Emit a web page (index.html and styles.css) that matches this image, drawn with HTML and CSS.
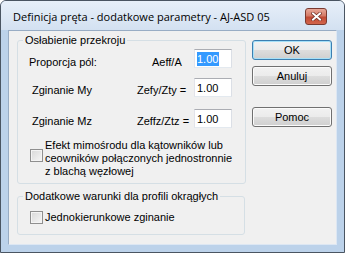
FILE: index.html
```html
<!DOCTYPE html>
<html lang="pl">
<head>
  <meta charset="UTF-8">
  <title>Definicja pręta - dodatkowe parametry</title>
  <link rel="stylesheet" href="styles.css">
</head>
<body>
  <div class="window">
    <div class="titlebar">
      <span class="title">Definicja pręta - dodatkowe parametry - AJ-ASD 05</span>
      <div class="close">
        <svg width="11" height="9" viewBox="0 0 11 9">
          <path d="M2 1.5 L9 7.5 M9 1.5 L2 7.5" stroke="#6d2a20" stroke-width="3.4" stroke-linecap="square"/>
          <path d="M2 1.5 L9 7.5 M9 1.5 L2 7.5" stroke="#fff" stroke-width="2" stroke-linecap="square"/>
        </svg>
      </div>
    </div>
    <div class="frame">
      <div class="client">
        <div class="groups">
          <fieldset class="group group-main">
            <legend>Osłabienie przekroju</legend>
            <div class="row row-first">
              <span class="name">Proporcja pól:</span>
              <span class="sym">Aeff/A</span>
              <div class="field"><span class="sel">1.00</span></div>
            </div>
            <div class="row row-my">
              <span class="name">Zginanie My</span>
              <span class="sym">Zefy/Zty =</span>
              <div class="field">1.00</div>
            </div>
            <div class="row row-mz">
              <span class="name">Zginanie Mz</span>
              <span class="sym">Zeffz/Ztz =</span>
              <div class="field">1.00</div>
            </div>
            <div class="check check-multi">
              <span class="box"></span>
              <span class="check-text">Efekt mimośrodu dla kątowników lub<br>ceowników połączonych jednostronnie<br>z blachą węzłowej</span>
            </div>
          </fieldset>
          <fieldset class="group group-round">
            <legend>Dodatkowe warunki dla profili okrągłych</legend>
            <div class="check check-single">
              <span class="box"></span>
              <span class="check-text">Jednokierunkowe zginanie</span>
            </div>
          </fieldset>
        </div>
        <div class="buttons">
          <div class="btn btn-default">OK</div>
          <div class="btn">Anuluj</div>
          <div class="btn btn-help">Pomoc</div>
        </div>
      </div>
    </div>
  </div>
</body>
</html>
```

FILE: styles.css
```css
body {
  margin: 0;
  background: #ffffff;
  font-family: "Liberation Sans", Arial, sans-serif;
  font-size: 11px;
  color: #000;
}
.window {
  width: 345px;
  height: 253px;
  box-sizing: border-box;
  border: 1px solid #4a5562;
  border-radius: 6px 6px 0 0;
  background: #bcd2ea;
  display: flex;
  flex-direction: column;
}
.titlebar {
  height: 29px;
  flex: none;
  display: flex;
  align-items: center;
  padding: 0 17px 0 12px;
  border-radius: 5px 5px 0 0;
  background: linear-gradient(#e7eff9, #d3e1f1);
}
.title {
  flex: 1;
  font-family: "Open Sans", "Noto Sans", sans-serif;
  font-size: 11px;
  line-height: 15px;
  padding-top: 1px;
}
.close {
  width: 22px;
  height: 17px;
  margin-top: 1px;
  box-sizing: border-box;
  border: 1px solid #7a3a30;
  border-radius: 3px;
  background: linear-gradient(#e8a898, #d47a66 45%, #c14a34 55%, #d2654c);
  display: flex;
  align-items: center;
  justify-content: center;
}
.close svg {
  display: block;
}
.frame {
  flex: 1;
  display: flex;
  padding: 0 7px 7px 7px;
}
.client {
  flex: 1;
  display: flex;
  border: 1px solid;
  border-color: #98acc4 #dde7f3 #dde7f3 #98acc4;
  background: #f0f0f0;
}
.groups {
  display: flex;
  flex-direction: column;
}
.group {
  margin: 3px 0 0 8px;
  padding: 0;
  min-width: 0;
  box-sizing: border-box;
  border: 1px solid #d5dfe5;
  border-radius: 3px;
}
.group legend {
  margin-left: 5px;
  padding: 0 2px;
  line-height: 13px;
}
.group-main {
  width: 229px;
  padding-bottom: 5px;
}
.group-round {
  width: 228px;
  margin-top: 6px;
  padding-bottom: 10px;
}
.row {
  display: flex;
  align-items: flex-start;
  line-height: 13px;
}
.row-first {
  margin-top: 2px;
}
.row-my {
  margin-top: 9px;
}
.row-mz {
  margin-top: 12px;
}
.row .name,
.row .sym {
  padding-top: 6px;
}
.row-first .name {
  margin-left: 11px;
  width: 123px;
}
.row-first .sym {
  width: 42px;
}
.row-first .name,
.row-first .sym {
  padding-top: 7px;
}
.row-my .name,
.row-mz .name {
  margin-left: 14px;
  width: 105px;
}
.row-my .sym,
.row-mz .sym {
  width: 57px;
}
.field {
  width: 38px;
  height: 19px;
  box-sizing: border-box;
  padding: 2px 0 0 2px;
  background: #fff;
  border: 1px solid;
  border-color: #abadb3 #dbdfe6 #e3e9ef #e2e3ea;
  line-height: 14px;
}
.sel {
  display: inline-block;
  background: #3399ff;
  color: #fff;
  padding: 0 1px 0 0;
}
.check {
  display: flex;
  line-height: 13px;
}
.check-multi {
  margin-top: 11px;
  align-items: flex-start;
}
.check-multi .box {
  margin-top: 10px;
}
.check-single {
  margin-top: 8px;
  align-items: flex-start;
}
.box {
  width: 13px;
  height: 13px;
  flex: none;
  box-sizing: border-box;
  margin-left: 12px;
  border: 1px solid #8f8f8f;
  background: linear-gradient(135deg, #d8d8d8, #f6f6f6);
  box-shadow: inset 0 0 0 1px #f4f4f4;
}
.check-text {
  margin-left: 2px;
}
.buttons {
  display: flex;
  flex-direction: column;
  margin-left: 6px;
  padding-top: 9px;
}
.btn {
  width: 80px;
  height: 20px;
  box-sizing: border-box;
  border: 1px solid #707070;
  border-radius: 3px;
  background: linear-gradient(#f2f2f2, #ebebeb 50%, #dddddd 50%, #cfcfcf);
  box-shadow: inset 0 0 0 1px #fbfbfb;
  text-align: center;
  line-height: 18px;
  margin-bottom: 6px;
}
.btn-default {
  border-color: #3c7fb1;
  box-shadow: inset 0 0 0 1px #a6e0f8;
}
.btn-help {
  margin-top: 15px;
}
```
